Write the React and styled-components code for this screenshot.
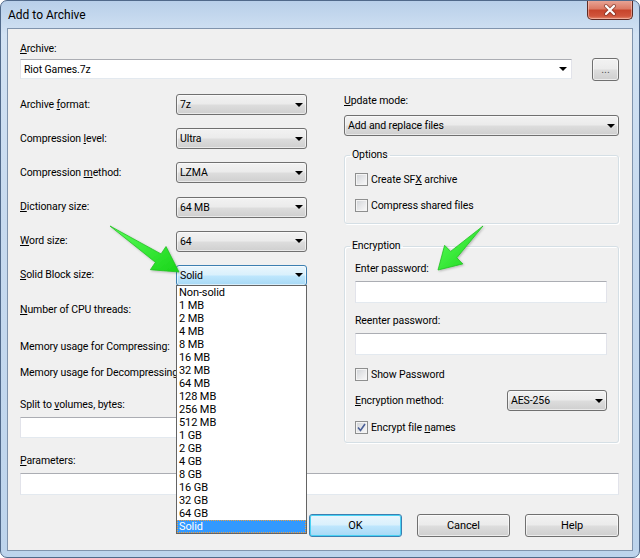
import React from "react";
import styled, { createGlobalStyle, css } from "styled-components";

const GlobalStyle = createGlobalStyle`
  html, body { margin: 0; padding: 0; background: #ffffff; }
  body {
    font-family: Roboto, "Liberation Sans", Arial, sans-serif;
    font-size: 10.5px;
    letter-spacing: -0.1px;
    color: #000;
  }
  * { box-sizing: border-box; }
`;

const Page = styled.div`
  position: relative;
  width: 640px;
  height: 558px;
`;

const Window = styled.div`
  width: 640px;
  height: 558px;
  display: flex;
  flex-direction: column;
  border: 1px solid #50698a;
  border-radius: 7px;
  overflow: hidden;
  background: linear-gradient(180deg, #b8cfe9 0%, #d2e2f3 6%, #c7daef 40%, #bdd4ec 100%);
`;

const TitleBar = styled.div`
  height: 28px;
  display: flex;
  justify-content: space-between;
  align-items: flex-start;
  padding-left: 7px;
  padding-right: 6px;
`;

const Title = styled.div`
  font-size: 12px;
  letter-spacing: 0;
  line-height: 16px;
  padding-top: 6px;
  color: #000;
`;

const CloseButton = styled.div`
  width: 46px;
  height: 20px;
  margin-top: -1px;
  display: flex;
  align-items: center;
  justify-content: center;
  border: 1px solid #5e2b24;
  border-top: none;
  border-radius: 0 0 5px 5px;
  background: linear-gradient(180deg, #e9a89a 0%, #dc7b66 45%, #c7452c 55%, #d0553c 85%, #e58b6f 100%);
  box-shadow: inset 0 0 0 1px rgba(255, 210, 200, 0.5);
`;

const Client = styled.div`
  flex: 1;
  margin: 0 6px 6px;
  border: 1px solid #8094ad;
  background: #f0f0f0;
  padding: 13px 13px 13px 12px;
  display: flex;
  flex-direction: column;
`;

const Label = styled.div`
  height: 14px;
  line-height: 14px;
  white-space: nowrap;
  margin-top: ${(p) => p.$mt || 0}px;
  ${(p) =>
    p.$clip &&
    css`
      width: ${p.$clip}px;
      overflow: hidden;
    `}
`;

const Key = styled.span`
  text-decoration: underline;
  text-underline-offset: 1px;
`;

const ArchiveRow = styled.div`
  display: flex;
  align-items: flex-start;
  gap: 20px;
  margin-top: 3px;
`;

const Arrow = styled.span`
  width: 0;
  height: 0;
  border-left: 4px solid transparent;
  border-right: 4px solid transparent;
  border-top: 4px solid #000;
  flex: none;
`;

const fieldBorder = css`
  border: 1px solid #e2e3ea;
  border-top-color: #abadb3;
  border-bottom-color: #e3e9ef;
  background: #fff;
`;

const EditCombo = styled.div`
  ${fieldBorder}
  flex: ${(p) => (p.$width ? "none" : 1)};
  width: ${(p) => (p.$width ? `${p.$width}px` : "auto")};
  height: ${(p) => p.$h || 20}px;
  display: flex;
  align-items: center;
  justify-content: space-between;
  padding: 0 4px 0 3px;
  margin-top: ${(p) => p.$mt || 0}px;
`;

const TextBox = styled.div`
  ${fieldBorder}
  height: 22px;
  margin-top: ${(p) => p.$mt || 0}px;
`;

const Combo = styled.div`
  position: relative;
  height: 21px;
  width: ${(p) => (p.$width ? `${p.$width}px` : "auto")};
  display: flex;
  align-items: center;
  justify-content: space-between;
  padding: 0 3px 0 3px;
  border: 1px solid ${(p) => (p.$active ? "#3c7fb1" : "#707070")};
  border-radius: 3px;
  background: ${(p) =>
    p.$active
      ? "linear-gradient(180deg, #eaf6fd 0%, #d9f0fc 48%, #bee6fd 52%, #a7d9f5 100%)"
      : "linear-gradient(180deg, #f2f2f2 0%, #ebebeb 48%, #dddddd 52%, #cfcfcf 100%)"};
  box-shadow: inset 0 0 0 1px rgba(255, 255, 255, 0.55);
  margin-top: ${(p) => p.$mt || 0}px;
`;

const DropList = styled.div`
  position: absolute;
  top: 100%;
  left: -1px;
  right: -1px;
  z-index: 10;
  background: #fff;
  border: 1px solid #646464;
  display: flex;
  flex-direction: column;
  font-size: 11px;
`;

const ListItem = styled.div`
  height: 13px;
  line-height: 13px;
  padding-left: 2px;
  white-space: nowrap;
  ${(p) =>
    p.$selected &&
    css`
      background: #3399ff;
      color: #fff;
      outline: 1px dotted #f0a040;
      outline-offset: -1px;
    `}
`;

const Columns = styled.div`
  display: flex;
  align-items: flex-start;
  gap: 37px;
  margin-top: 13px;
`;

const LeftColumn = styled.div`
  width: 287px;
  display: flex;
  flex-direction: column;
`;

const RightColumn = styled.div`
  width: 275px;
  display: flex;
  flex-direction: column;
`;

const FormGrid = styled.div`
  display: grid;
  grid-template-columns: 156px 131px;
  grid-auto-rows: 21px;
  row-gap: 13.2px;
  align-items: center;
`;

const Group = styled.fieldset`
  margin: ${(p) => p.$mt || 0}px 0 0;
  padding: ${(p) => p.$pt || 10}px 11px ${(p) => p.$pb || 10}px 10px;
  border: 1px solid #d5dfe5;
  border-radius: 3px;
  box-shadow: inset 1px 1px 0 #fff, 1px 1px 0 #fff;
  display: flex;
  flex-direction: column;
  min-width: 0;
`;

const Legend = styled.legend`
  padding: 0 2px;
  margin-left: -5px;
  line-height: 14px;
  height: 14px;
`;

const CheckRow = styled.div`
  display: flex;
  align-items: center;
  gap: 3px;
  height: 14px;
  margin-top: ${(p) => p.$mt || 0}px;
`;

const Box = styled.span`
  width: 13px;
  height: 13px;
  flex: none;
  border: 1px solid #8e8f8f;
  background: linear-gradient(135deg, #cfd2d6 0%, #e6e7e9 50%, #fafafa 100%);
  box-shadow: inset 0 0 0 1px #f4f4f4;
  display: flex;
  align-items: center;
  justify-content: center;
`;

const MethodRow = styled.div`
  display: flex;
  align-items: center;
  justify-content: space-between;
  margin-top: 9px;
`;

const ButtonRow = styled.div`
  display: flex;
  justify-content: flex-end;
  gap: 15px;
  margin-top: 19px;
`;

const Button = styled.div`
  width: ${(p) => p.$width || 93}px;
  height: 23px;
  display: flex;
  align-items: center;
  justify-content: center;
  border: 1px solid ${(p) => (p.$default ? "#3c7fb1" : "#707070")};
  border-radius: 3px;
  background: ${(p) =>
    p.$default
      ? "linear-gradient(180deg, #eaf6fd 0%, #d9f0fc 48%, #bee6fd 52%, #a7d9f5 100%)"
      : "linear-gradient(180deg, #f2f2f2 0%, #ebebeb 48%, #dddddd 52%, #cfcfcf 100%)"};
  box-shadow: inset 0 0 0 1px ${(p) => (p.$default ? "#48d2f4" : "rgba(255,255,255,0.6)")};
  margin-top: ${(p) => p.$mt || 0}px;
  color: ${(p) => p.$dim || "#000"};
  font-size: 11px;
`;

const ArrowLayer = styled.svg`
  position: absolute;
  left: 0;
  top: 0;
  pointer-events: none;
  z-index: 20;
`;

const solidSizes = [
  "Non-solid", "1 MB", "2 MB", "4 MB", "8 MB", "16 MB", "32 MB", "64 MB",
  "128 MB", "256 MB", "512 MB", "1 GB", "2 GB", "4 GB", "8 GB", "16 GB",
  "32 GB", "64 GB", "Solid",
];

function Check({ checked }) {
  return (
    <Box>
      {checked && (
        <svg width="9" height="9" viewBox="0 0 9 9">
          <path d="M1 4.5 L3.5 7.5 L8 1" fill="none" stroke="#4a5f97" strokeWidth="1.6" />
        </svg>
      )}
    </Box>
  );
}

function Select({ value, active, width, children, mt }) {
  return (
    <Combo $active={active} $width={width} $mt={mt}>
      <span>{value}</span>
      <Arrow />
      {children}
    </Combo>
  );
}

export default function App() {
  return (
    <Page>
      <GlobalStyle />
      <Window>
        <TitleBar>
          <Title>Add to Archive</Title>
          <CloseButton>
            <svg width="14" height="12" viewBox="0 0 14 12">
              <path d="M3 2 L11 10 M11 2 L3 10" stroke="#6a2a20" strokeWidth="4" strokeLinecap="round" opacity="0.55" />
              <path d="M3 2 L11 10 M11 2 L3 10" stroke="#fff" strokeWidth="2.2" strokeLinecap="round" />
            </svg>
          </CloseButton>
        </TitleBar>

        <Client>
          <Label><Key>A</Key>rchive:</Label>
          <ArchiveRow>
            <EditCombo>
              <span>Riot Games.7z</span>
              <Arrow />
            </EditCombo>
            <Button $width={27} $mt={-1} $dim="#555">...</Button>
          </ArchiveRow>

          <Columns>
            <LeftColumn>
              <FormGrid>
                <Label>Archive <Key>f</Key>ormat:</Label>
                <Select value="7z" />
                <Label>Compression <Key>l</Key>evel:</Label>
                <Select value="Ultra" />
                <Label>Compression <Key>m</Key>ethod:</Label>
                <Select value="LZMA" />
                <Label><Key>D</Key>ictionary size:</Label>
                <Select value="64 MB" />
                <Label><Key>W</Key>ord size:</Label>
                <Select value="64" />
                <Label><Key>S</Key>olid Block size:</Label>
                <Select value="Solid" active>
                  <DropList>
                    {solidSizes.map((s, i) => (
                      <ListItem key={s} $selected={i === solidSizes.length - 1}>{s}</ListItem>
                    ))}
                  </DropList>
                </Select>
                <Label><Key>N</Key>umber of CPU threads:</Label>
                <Select value="" />
              </FormGrid>
              <Label $mt={20} $clip={156}>Memory usage for Compressing:</Label>
              <Label $mt={12} $clip={156}>Memory usage for Decompressing:</Label>
              <Label $mt={18}>Split to <Key>v</Key>olumes, bytes:</Label>
              <EditCombo $width={287} $h={21} $mt={5}>
                <span />
                <Arrow />
              </EditCombo>
            </LeftColumn>

            <RightColumn>
              <Label><Key>U</Key>pdate mode:</Label>
              <Select value="Add and replace files" mt={7} />
              <Group $mt={12} $pt={10} $pb={11}>
                <Legend>Options</Legend>
                <CheckRow>
                  <Check />
                  <span>Create SF<Key>X</Key> archive</span>
                </CheckRow>
                <CheckRow $mt={12}>
                  <Check />
                  <span>Compress shared files</span>
                </CheckRow>
              </Group>
              <Group $mt={15} $pt={9} $pb={8}>
                <Legend>Encryption</Legend>
                <Label>Enter password:</Label>
                <TextBox $mt={5} />
                <Label $mt={11}>Reenter password:</Label>
                <TextBox $mt={5} />
                <CheckRow $mt={12}>
                  <Check />
                  <span>Show Password</span>
                </CheckRow>
                <MethodRow>
                  <Label><Key>E</Key>ncryption method:</Label>
                  <Select value="AES-256" width={100} />
                </MethodRow>
                <CheckRow $mt={9}>
                  <Check checked />
                  <span>Encrypt file <Key>n</Key>ames</span>
                </CheckRow>
              </Group>
            </RightColumn>
          </Columns>

          <Label $mt={11}><Key>P</Key>arameters:</Label>
          <TextBox $mt={5} />

          <ButtonRow>
            <Button $default>OK</Button>
            <Button>Cancel</Button>
            <Button $width={94}>Help</Button>
          </ButtonRow>
        </Client>
      </Window>

      <ArrowLayer width="640" height="558" viewBox="0 0 640 558">
        <defs>
          <linearGradient id="greenFill" x1="0" y1="0" x2="1" y2="1">
            <stop offset="0" stopColor="#5cff5c" />
            <stop offset="1" stopColor="#18d418" />
          </linearGradient>
          <filter id="arrowShadow" x="-20%" y="-20%" width="140%" height="140%">
            <feDropShadow dx="1" dy="1" stdDeviation="1" floodColor="#000" floodOpacity="0.25" />
          </filter>
        </defs>
        <polygon
          points="110,226 161,253.9 166,246.5 179,272 150.4,269.7 155.4,262.3"
          fill="url(#greenFill)"
          stroke="#22c022"
          strokeWidth="0.8"
          strokeLinejoin="round"
          filter="url(#arrowShadow)"
        />
        <polygon
          points="483,226 456.8,257.8 462.8,263.9 438,270 444.6,245.3 450.6,251.4"
          fill="url(#greenFill)"
          stroke="#22c022"
          strokeWidth="0.8"
          strokeLinejoin="round"
          filter="url(#arrowShadow)"
        />
      </ArrowLayer>
    </Page>
  );
}
